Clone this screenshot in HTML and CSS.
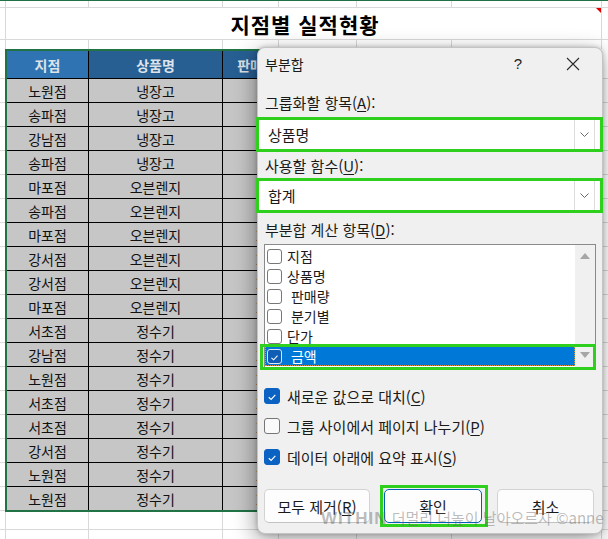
FILE: index.html
```html
<!DOCTYPE html>
<html lang="ko">
<head>
<meta charset="utf-8">
<title>부분합</title>
<link rel="stylesheet" href="styles.css">
</head>
<body>
<div class="sheet">
  <div class="grid-row r1">
    <div class="c a"></div><div class="c b"></div><div class="c cc"></div><div class="c d"></div><div class="c e"></div><div class="c f"></div><div class="c g"></div><div class="c h"></div>
  </div>
  <div class="grid-row title-row">
    <div class="c a"></div>
    <div class="c merged"><span class="title">지점별 실적현황</span><span class="comment-mark"></span></div>
    <div class="c h"></div>
  </div>
  <div class="grid-row r3">
    <div class="c a"></div><div class="c b"></div><div class="c cc"></div><div class="c d"></div><div class="c e"></div><div class="c f"></div><div class="c g"></div><div class="c h"></div>
  </div>

  <div class="table-zone">
    <div class="gutter"></div>
    <div class="data">
      <div class="trow head"><div class="td c1 hd1">지점</div><div class="td c2">상품명</div><div class="td c3">판매량</div><div class="td c4">분기별</div></div>
      <div class="trow"><div class="td c1">노원점</div><div class="td c2">냉장고</div><div class="td c3 num">15</div><div class="td c4"></div></div>
      <div class="trow"><div class="td c1">송파점</div><div class="td c2">냉장고</div><div class="td c3 num">12</div><div class="td c4"></div></div>
      <div class="trow"><div class="td c1">강남점</div><div class="td c2">냉장고</div><div class="td c3 num">18</div><div class="td c4"></div></div>
      <div class="trow"><div class="td c1">송파점</div><div class="td c2">냉장고</div><div class="td c3 num">11</div><div class="td c4"></div></div>
      <div class="trow"><div class="td c1">마포점</div><div class="td c2">오븐렌지</div><div class="td c3 num">14</div><div class="td c4"></div></div>
      <div class="trow"><div class="td c1">송파점</div><div class="td c2">오븐렌지</div><div class="td c3 num">16</div><div class="td c4"></div></div>
      <div class="trow"><div class="td c1">마포점</div><div class="td c2">오븐렌지</div><div class="td c3 num">23</div><div class="td c4"></div></div>
      <div class="trow"><div class="td c1">강서점</div><div class="td c2">오븐렌지</div><div class="td c3 num">25</div><div class="td c4"></div></div>
      <div class="trow"><div class="td c1">강서점</div><div class="td c2">오븐렌지</div><div class="td c3 num">21</div><div class="td c4"></div></div>
      <div class="trow"><div class="td c1">마포점</div><div class="td c2">오븐렌지</div><div class="td c3 num">24</div><div class="td c4"></div></div>
      <div class="trow"><div class="td c1">서초점</div><div class="td c2">정수기</div><div class="td c3 num">13</div><div class="td c4"></div></div>
      <div class="trow"><div class="td c1">강남점</div><div class="td c2">정수기</div><div class="td c3 num">22</div><div class="td c4"></div></div>
      <div class="trow"><div class="td c1">노원점</div><div class="td c2">정수기</div><div class="td c3 num">26</div><div class="td c4"></div></div>
      <div class="trow"><div class="td c1">서초점</div><div class="td c2">정수기</div><div class="td c3 num">20</div><div class="td c4"></div></div>
      <div class="trow"><div class="td c1">서초점</div><div class="td c2">정수기</div><div class="td c3 num">27</div><div class="td c4"></div></div>
      <div class="trow"><div class="td c1">강서점</div><div class="td c2">정수기</div><div class="td c3 num">19</div><div class="td c4"></div></div>
      <div class="trow"><div class="td c1">노원점</div><div class="td c2">정수기</div><div class="td c3 num">22</div><div class="td c4"></div></div>
      <div class="trow last"><div class="td c1">노원점</div><div class="td c2">정수기</div><div class="td c3 num">24</div><div class="td c4"></div></div>
    </div>
    <div class="zone-rest"></div>
  </div>

  <div class="grid-row rb1">
    <div class="c a"></div><div class="c b"></div><div class="c cc"></div><div class="c d"></div><div class="c e"></div><div class="c f"></div><div class="c g"></div><div class="c h"></div>
  </div>
  <div class="grid-row rb2">
    <div class="c a"></div><div class="c b"></div><div class="c cc"></div><div class="c d"></div><div class="c e"></div><div class="c f"></div><div class="c g"></div><div class="c h"></div>
  </div>

  <div class="dialog">
    <div class="titlebar">
      <span class="dlg-title">부분합</span>
      <span class="help">?</span>
      <span class="close">
        <svg width="14" height="14" viewBox="0 0 14 14"><path d="M1 1 L13 13 M13 1 L1 13" stroke="#2b2b2b" stroke-width="1.1" fill="none"/></svg>
      </span>
    </div>

    <div class="label l1">그룹화할 항목(<u>A</u>):</div>
    <div class="combo c-1">
      <span class="combo-text">상품명</span>
      <span class="drop"><svg width="9" height="5" viewBox="0 0 9 5"><polyline points="0.5,0.5 4.5,4.5 8.5,0.5" stroke="#6a6a6a" stroke-width="1" fill="none"/></svg></span>
    </div>

    <div class="label l2">사용할 함수(<u>U</u>):</div>
    <div class="combo c-2">
      <span class="combo-text">합계</span>
      <span class="drop"><svg width="9" height="5" viewBox="0 0 9 5"><polyline points="0.5,0.5 4.5,4.5 8.5,0.5" stroke="#6a6a6a" stroke-width="1" fill="none"/></svg></span>
    </div>

    <div class="label l3">부분합 계산 항목(<u>D</u>):</div>
    <div class="listbox">
      <div class="items">
        <div class="item"><span class="lbox"></span><span class="itxt">지점</span></div>
        <div class="item"><span class="lbox"></span><span class="itxt">상품명</span></div>
        <div class="item"><span class="lbox"></span><span class="itxt"> 판매량</span></div>
        <div class="item"><span class="lbox"></span><span class="itxt"> 분기별</span></div>
        <div class="item"><span class="lbox"></span><span class="itxt">단가</span></div>
        <div class="item selected"><span class="lbox on"><svg width="15" height="15" viewBox="0 0 15 15"><polyline points="4,7.8 6.5,10.2 11,5.4" stroke="#fff" stroke-width="1.2" fill="none"/></svg></span><span class="itxt"> 금액</span></div>
      </div>
      <div class="scrollbar">
        <svg width="10" height="6" viewBox="0 0 10 6"><polygon points="0,6 5,0 10,6" fill="#a6a6a6"/></svg>
        <svg width="10" height="6" viewBox="0 0 10 6"><polygon points="0,0 10,0 5,6" fill="#a6a6a6"/></svg>
      </div>
      <div class="mark mark-list"></div>
    </div>

    <div class="option o1"><span class="cbox on"><svg width="16" height="16" viewBox="0 0 16 16"><polyline points="4.3,8.3 7,10.8 11.8,5.6" stroke="#fff" stroke-width="1.3" fill="none"/></svg></span><span>새로운 값으로 대치(<u>C</u>)</span></div>
    <div class="option o2"><span class="cbox"></span><span>그룹 사이에서 페이지 나누기(<u>P</u>)</span></div>
    <div class="option o3"><span class="cbox on"><svg width="16" height="16" viewBox="0 0 16 16"><polyline points="4.3,8.3 7,10.8 11.8,5.6" stroke="#fff" stroke-width="1.3" fill="none"/></svg></span><span>데이터 아래에 요약 표시(<u>S</u>)</span></div>

    <div class="buttons">
      <div class="btn b-remove">모두 제거(<u>R</u>)</div>
      <div class="btn b-ok">확인<span class="mark mark-ok"></span></div>
      <div class="btn b-cancel">취소</div>
    </div>
  </div>

  <div class="watermark"><span class="wm-logo">WITHIN</span> 더멀리 더높이 날아오르자 ©anne</div>
</div>
</body>
</html>
```

FILE: styles.css
```css
* { box-sizing: border-box; }
html, body { margin: 0; padding: 0; }
body {
  width: 608px;
  height: 539px;
  overflow: hidden;
  background: #fff;
  font-family: "Noto Sans CJK KR", "Noto Sans", sans-serif;
  color: #111;
}

.sheet {
  position: relative;
  width: 608px;
  height: 539px;
  overflow: hidden;
  border-top: 1px solid #217346;
  background: #fff;
}

/* ---------- spreadsheet grid ---------- */
.grid-row { display: flex; }
.c { flex: none; height: 100%; border-right: 1px solid #d9d9d9; }
.a { width: 6px; }
.b { width: 83px; }
.cc { width: 134px; }
.d { width: 56px; }
.e { width: 78px; }
.f { width: 95px; }
.g { width: 150px; }
.h { flex: 1; border-right: none; }
.merged {
  width: 596px;
  position: relative;
  display: flex;
  align-items: center;
  justify-content: center;
}
.r1 { height: 7px; border-bottom: 1px solid #d9d9d9; }
.title-row { height: 32px; border-bottom: 1px solid #d9d9d9; }
.r3 { height: 9px; }
.rb1 { height: 18px; border-bottom: 1px solid #d9d9d9; }
.rb2 { height: 12px; }

.title {
  font-size: 21px;
  font-weight: 700;
  letter-spacing: 1px;
  line-height: 24px;
  color: #000;
  margin-left: 3px;
}
.comment-mark {
  position: absolute;
  top: 0;
  right: 0;
  width: 0;
  height: 0;
  border-top: 5px solid #e00000;
  border-left: 5px solid transparent;
}

/* ---------- table ---------- */
.table-zone { display: flex; height: 463px; }
.gutter {
  width: 5px;
  flex: none;
  background: repeating-linear-gradient(to bottom, transparent 0 23px, #d9d9d9 23px 24px);
  background-position: 0 6px;
}
.zone-rest {
  flex: 1;
  background: repeating-linear-gradient(to bottom, transparent 0 23px, #d9d9d9 23px 24px);
  background-position: 0 6px;
}
.data {
  flex: none;
  width: 356px;
  border: 2px solid #217346;
  border-right: none;
  display: flex;
  flex-direction: column;
}
.trow {
  display: flex;
  height: 24px;
  border-bottom: 1px solid #000;
  background: #c6c6c6;
}
.trow.head { height: 28px; background: #275f93; }
.trow.last { height: 23px; border-bottom: none; }
.td {
  flex: none;
  height: 100%;
  border-right: 1px solid #000;
  display: flex;
  align-items: center;
  justify-content: center;
  font-size: 14px;
  line-height: 16px;
  color: #111;
}
.c1 { width: 82px; }
.c2 { width: 134px; }
.c3 { width: 68px; }
.c4 { width: 70px; }
.num { justify-content: flex-start; padding-left: 33px; color: #3a2a10; }
.head .td { color: #dde3ea; font-weight: 700; }
.head .hd1 { background: #2f73b3; }

/* ---------- dialog ---------- */
.dialog {
  position: absolute;
  left: 257px;
  top: 46px;
  width: 346px;
  height: 487px;
  background: #f0f0f0;
  border: 1px solid #c4c4c4;
  border-radius: 8px;
  box-shadow: -2px 6px 22px rgba(0, 0, 0, 0.38), 0 0 4px rgba(0, 0, 0, 0.22);
  padding: 0 6px 0 6px;
  display: flex;
  flex-direction: column;
  font-size: 15px;
  color: #1a1a1a;
}
.titlebar {
  height: 31px;
  display: flex;
  align-items: center;
  flex: none;
}
.dlg-title { font-size: 14px; line-height: 18px; padding-left: 1px; flex: 1; }
.help {
  width: 20px;
  text-align: center;
  font-family: "Liberation Sans", sans-serif;
  font-size: 15px;
  line-height: 18px;
  color: #222;
}
.close {
  width: 24px;
  height: 18px;
  margin-left: 33px;
  margin-right: 11px;
  display: flex;
  align-items: center;
  justify-content: center;
}

.label { height: 20px; line-height: 20px; padding-left: 1px; flex: none; white-space: nowrap; }
.l1 { margin-top: 14px; }
.l2 { margin-top: 4px; }
.l3 { margin-top: 7px; }
u { text-decoration: underline; text-underline-offset: 2px; }

.combo {
  flex: none;
  height: 35px;
  margin: 4px -7px 0 -8px;
  border: 3px solid #2fcf1e;
  background: #fff;
  display: flex;
  align-items: stretch;
}
.c-2 { margin-top: 2px; }
.combo-text { flex: 1; padding-left: 9px; display: flex; align-items: center; font-size: 15px; }
.drop {
  width: 21px;
  margin-right: 5px;
  border-left: 1px solid #dcdcdc;
  border-right: 1px solid #dcdcdc;
  display: flex;
  align-items: center;
  justify-content: center;
}

.listbox {
  position: relative;
  flex: none;
  height: 124px;
  margin-top: 4px;
  border: 1px solid #8a8a8a;
  background: #fff;
  display: flex;
}
.items { flex: 1; padding-top: 1px; display: flex; flex-direction: column; }
.item {
  height: 20px;
  display: flex;
  align-items: center;
  padding-left: 2px;
  font-size: 14px;
  white-space: pre;
}
.lbox {
  width: 15px;
  height: 15px;
  border: 1px solid #777;
  border-radius: 3px;
  background: #fff;
  margin-right: 5px;
  flex: none;
  display: flex;
}
.lbox.on { background: #0f5db4; border-color: #dfe8f2; }
.item.selected {
  background: #0078d7;
  color: #fff;
  outline: 1px dotted #d39445;
  outline-offset: -1px;
}
.scrollbar {
  width: 20px;
  flex: none;
  background: #f0f0f0;
  display: flex;
  flex-direction: column;
  align-items: center;
  justify-content: space-between;
  padding: 8px 0 9px;
}
.mark { position: absolute; border: 3px solid #2fcf1e; pointer-events: none; }
.mark-list { left: -5px; top: 99px; width: 336px; height: 26px; }

.option {
  height: 20px;
  display: flex;
  align-items: center;
  white-space: nowrap;
  flex: none;
}
.o1 { margin-top: 18px; }
.o2 { margin-top: 10px; }
.o3 { margin-top: 11px; }
.cbox {
  width: 16px;
  height: 16px;
  border: 1px solid #767676;
  border-radius: 3px;
  background: #fafafa;
  margin-right: 7px;
  flex: none;
  display: flex;
}
.cbox.on { background: #0a63c2; border-color: #0a63c2; }
.cbox svg, .lbox svg { display: block; }

.buttons { display: flex; margin-top: 22px; flex: none; }
.btn {
  position: relative;
  height: 34px;
  background: #fdfdfd;
  border: 1px solid #d3d3d3;
  border-bottom-color: #c2c2c2;
  border-radius: 5px;
  display: flex;
  align-items: center;
  justify-content: center;
  font-size: 15px;
}
.b-remove { width: 106px; }
.b-ok { width: 98px; margin-left: 14px; border: 1px solid #005fb8; box-shadow: inset 0 0 0 1px #fff; }
.b-cancel { width: 97px; margin-left: 15px; }
.mark-ok { left: -5px; top: -5px; width: 108px; height: 42px; }

.watermark {
  position: absolute;
  left: 321px;
  top: 507px;
  font-size: 15px;
  line-height: 20px;
  color: rgba(95, 95, 95, 0.42);
  white-space: nowrap;
  pointer-events: none;
}
.wm-logo {
  font-family: "Liberation Sans", sans-serif;
  font-weight: 700;
  font-size: 17px;
  letter-spacing: 1px;
}
```
